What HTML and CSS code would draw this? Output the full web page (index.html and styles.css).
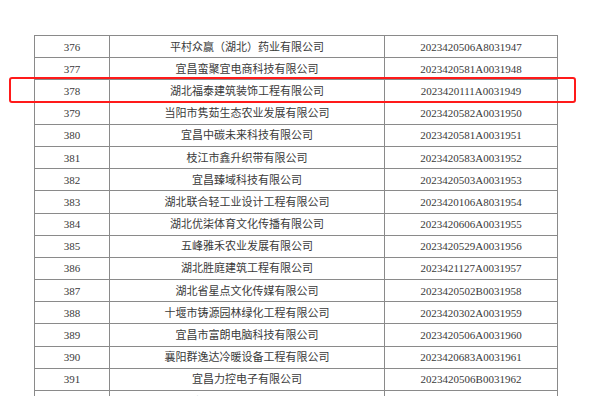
FILE: index.html
```html
<!DOCTYPE html>
<html lang="zh">
<head>
<meta charset="utf-8">
<link rel="stylesheet" href="styles.css">
</head>
<body>
<div class="page">
  <table class="list">
    <colgroup><col class="c-no"><col class="c-name"><col class="c-code"></colgroup>
    <tbody>
      <tr><td>376</td><td>平村众赢（湖北）药业有限公司</td><td>2023420506A8031947</td></tr>
      <tr><td>377</td><td>宜昌蛮聚宜电商科技有限公司</td><td>2023420581A0031948</td></tr>
      <tr><td>378</td><td>湖北福泰建筑装饰工程有限公司</td><td>2023420111A0031949</td></tr>
      <tr><td>379</td><td>当阳市隽茹生态农业发展有限公司</td><td>2023420582A0031950</td></tr>
      <tr><td>380</td><td>宜昌中碳未来科技有限公司</td><td>2023420581A0031951</td></tr>
      <tr><td>381</td><td>枝江市鑫升织带有限公司</td><td>2023420583A0031952</td></tr>
      <tr><td>382</td><td>宜昌臻域科技有限公司</td><td>2023420503A0031953</td></tr>
      <tr><td>383</td><td>湖北联合轻工业设计工程有限公司</td><td>2023420106A8031954</td></tr>
      <tr><td>384</td><td>湖北优柒体育文化传播有限公司</td><td>2023420606A0031955</td></tr>
      <tr><td>385</td><td>五峰雅禾农业发展有限公司</td><td>2023420529A0031956</td></tr>
      <tr><td>386</td><td>湖北胜庭建筑工程有限公司</td><td>2023421127A0031957</td></tr>
      <tr><td>387</td><td>湖北省星点文化传媒有限公司</td><td>2023420502B0031958</td></tr>
      <tr><td>388</td><td>十堰市铸源园林绿化工程有限公司</td><td>2023420302A0031959</td></tr>
      <tr><td>389</td><td>宜昌市富朗电脑科技有限公司</td><td>2023420506A0031960</td></tr>
      <tr><td>390</td><td>襄阳群逸达冷暖设备工程有限公司</td><td>2023420683A0031961</td></tr>
      <tr><td>391</td><td>宜昌力控电子有限公司</td><td>2023420506B0031962</td></tr>
      <tr><td>392</td><td>襄阳鼎盛建材有限公司</td><td>2023420606A0031963</td></tr>
    </tbody>
  </table>
  <div class="highlight"></div>
</div>
</body>
</html>
```
FILE: styles.css
```css
html, body {
  margin: 0;
  padding: 0;
  background: #ffffff;
  overflow: hidden;
}
.page {
  position: relative;
  width: 600px;
  height: 396px;
  padding: 35px 0 0 34px;
  box-sizing: border-box;
}
.list {
  border-collapse: collapse;
  table-layout: fixed;
  width: 523px;
  font-family: "Liberation Serif", "Noto Sans CJK SC", serif;
  font-size: 11px;
  color: #3a3a3a;
}
.c-no { width: 75px; }
.c-name { width: 275px; }
.c-code { width: 173px; }
.list td {
  border: 1px solid #8a8a8a;
  height: 21.2px;
  padding: 0;
  text-align: center;
  vertical-align: middle;
  white-space: nowrap;
  line-height: 14px;
}
.highlight {
  position: absolute;
  left: 9px;
  top: 77px;
  width: 563px;
  height: 22px;
  border: 2.5px solid #ff1a1a;
  border-radius: 3px;
}
```
